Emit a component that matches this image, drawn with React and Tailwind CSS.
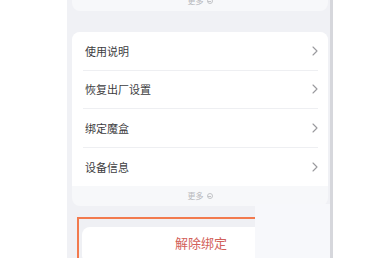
import React from "react";

const font = { fontFamily: '"Noto Sans CJK SC", "Noto Sans", sans-serif' };

function Chevron() {
  return (
    <svg width="6" height="10" viewBox="0 0 6 10" fill="none">
      <path d="M1 1l4 4-4 4" stroke="#9a9a9e" strokeWidth="1.1" strokeLinecap="round" strokeLinejoin="round" />
    </svg>
  );
}

function More() {
  return (
    <div className="flex items-center justify-center gap-[3px] text-[8px] text-[#b9babe] leading-none">
      <span>更多</span>
      <span className="w-[6px] h-[6px] rounded-full border border-[#c2c3c7] flex items-center justify-center">
        <span className="w-[3px] h-px bg-[#c2c3c7]" />
      </span>
    </div>
  );
}

const rows = ["使用说明", "恢复出厂设置", "绑定魔盒", "设备信息"];

export default function App() {
  return (
    <div className="w-[380px] h-[258px] bg-white flex overflow-hidden" style={font}>
      <div className="w-[67px] shrink-0" />
      <div className="w-[263px] shrink-0 bg-[#f0f1f5] relative flex flex-col pl-[5px] pr-[2px]">
        <div className="h-[11px] shrink-0 bg-[#f7f8fa] rounded-b-[8px] overflow-hidden">
          <div className="h-[20px] -mt-[9px] flex items-center justify-center">
            <More />
          </div>
        </div>
        <div className="mt-[21px] shrink-0 rounded-[8px] bg-[#f7f8fa] overflow-hidden">
          <div className="bg-white">
            {rows.map((r, i) => (
              <div
                key={r}
                className={
                  "h-[38.5px] ml-[11px] mr-[10px] pl-[2px] flex items-center justify-between " +
                  (i < rows.length - 1 ? "border-b border-[#eeeff2]" : "")
                }
              >
                <span className="text-[11px] text-[#3c3c40]">{r}</span>
                <Chevron />
              </div>
            ))}
          </div>
          <div className="h-[20px] flex items-center justify-center">
            <More />
          </div>
        </div>
        <div className="mt-[11px] ml-[5px] mr-[3px] shrink-0 border-2 border-[#f27a4e] pt-[8px] px-[3px] pb-0 border-b-0 bg-[#eff0f4]">
          <div className="h-[36px] rounded-[8px] bg-white flex items-start justify-center pt-[6px]">
            <span className="text-[13px] text-[#d2615a]">解除绑定</span>
          </div>
        </div>
        <div className="absolute left-[188px] right-0 top-[204px] bottom-0 bg-[#f7f8fb]" />
      </div>
      <div className="w-[3px] shrink-0 bg-[#d6d7dc]" />
      <div className="flex-1" />
    </div>
  );
}
